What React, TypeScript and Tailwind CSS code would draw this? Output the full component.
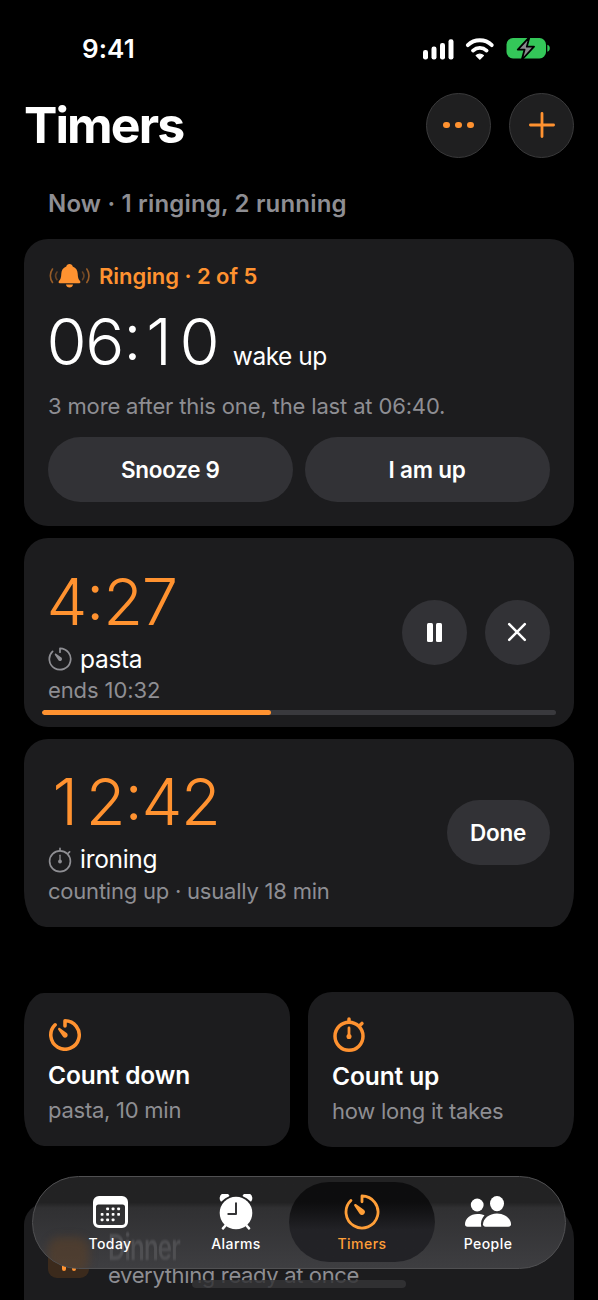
import React from 'react';

interface IconProps {
  className?: string;
  strokeWidth?: number;
}

interface StartCardProps {
  icon: React.ReactNode;
  title: string;
  hint: string;
  className?: string;
}

interface Tab {
  id: string;
  label: string;
  icon: React.ReactNode;
}

// Icons
const TimerIcon: React.FC<IconProps> = ({ className = '', strokeWidth = 2.8 }) => (
  <svg viewBox="0 0 36 36" className={className} fill="none" stroke="currentColor" strokeWidth={strokeWidth} strokeLinecap="round" strokeLinejoin="round">
    <path d="M18 7.800V2A16 16 0 1 1 6.900 6.500" />
    <path d="M10.500 10.300c.5-.5 1.100-.5 1.700-.1l7.300 5.200a3 3 0 1 1-4.100 4.100l-5-7.400c-.4-.6-.4-1.300.1-1.800z" fill="currentColor" stroke="none" />
  </svg>
);

const StopwatchIcon: React.FC<IconProps> = ({ className = '', strokeWidth = 2.8 }) => (
  <svg viewBox="0 0 36 40" className={className} fill="none" stroke="currentColor" strokeWidth={strokeWidth} strokeLinecap="round">
    <circle cx="18" cy="22" r="16" />
    <path d="M18 5.500V2.200M30.600 9.400L32.800 7.400" />
    <path d="M18 22V12.500" strokeWidth={strokeWidth * 0.8} />
    <circle cx="18" cy="22.300" r="2.900" fill="currentColor" stroke="none" />
  </svg>
);

const BellIcon = () => (
  <svg viewBox="0 0 42 24" className="h-6 w-[42px]" fill="none">
    <path d="M21.500 0c1.800 0 3 1.100 3.200 2.500 3.300 1.100 4.900 3.900 5 7.300.1 3.800.8 5.600 2.300 7.200.7.700.7 2.200-.8 2.200H11.800c-1.500 0-1.500-1.500-.8-2.200 1.500-1.600 2.200-3.400 2.300-7.200.1-3.400 1.700-6.200 5-7.300C18.500 1.100 19.700 0 21.500 0z" fill="#ff9230" />
    <path d="M18 20.600h7c-.2 1.800-1.600 3-3.500 3s-3.300-1.200-3.500-3z" fill="#ff9230" />
    <g stroke="#ff9230" strokeWidth="1.600" strokeLinecap="round">
      <path d="M4.500 5C1.600 9 1.600 14.500 4.500 18.500M38.800 5c2.900 4 2.900 9.500 0 13.500" opacity=".55" />
      <path d="M9 8c-1.800 2.400-1.800 5.300 0 7.700M34.500 8c1.800 2.400 1.800 5.300 0 7.700" opacity=".35" />
    </g>
  </svg>
);

const CalendarIcon = () => (
  <svg viewBox="0 0 35 32" className="h-8 w-[35px]">
    <path fillRule="evenodd" fill="#fff" d="M6 0h23a6 6 0 0 1 6 6v20a6 6 0 0 1-6 6H6a6 6 0 0 1-6-6V6a6 6 0 0 1 6-6zM5.500 8.500a2.500 2.500 0 0 0-2.500 2.500v15a3 3 0 0 0 3 3h23a3 3 0 0 0 3-3V11a2.500 2.500 0 0 0-2.500-2.500z" />
    <g fill="#fff">
      <rect x="13.200" y="11.500" width="2.800" height="2.800" rx=".8" />
      <rect x="18.700" y="11.500" width="2.800" height="2.800" rx=".8" />
      <rect x="24.200" y="11.500" width="2.800" height="2.800" rx=".8" />
      <rect x="7.700" y="17" width="2.800" height="2.800" rx=".8" />
      <rect x="13.200" y="17" width="2.800" height="2.800" rx=".8" />
      <rect x="18.700" y="17" width="2.800" height="2.800" rx=".8" />
      <rect x="24.200" y="17" width="2.800" height="2.800" rx=".8" />
      <rect x="7.700" y="22.500" width="2.800" height="2.800" rx=".8" />
      <rect x="13.200" y="22.500" width="2.800" height="2.800" rx=".8" />
      <rect x="18.700" y="22.500" width="2.800" height="2.800" rx=".8" />
    </g>
  </svg>
);

const AlarmIcon = () => (
  <svg viewBox="0 0 34 36" className="h-9 w-[34px]" fill="none">
    <circle cx="17" cy="19" r="16.300" fill="#fff" />
    <path d="M2.200 6.600A4.300 4.300 0 0 1 9.500 1.800C6.500 2.900 4.200 4.500 2.200 6.600zM31.800 6.600A4.300 4.300 0 0 0 24.500 1.800C27.500 2.900 29.800 4.500 31.800 6.600z" fill="#fff" stroke="#fff" strokeWidth="1.600" strokeLinejoin="round" />
    <path d="M6.500 31.500L4 34.300M27.500 31.500L30 34.300" stroke="#fff" strokeWidth="2.600" strokeLinecap="round" />
    <path d="M17 9.200V20H9.300" stroke="#343436" strokeWidth="2" strokeLinecap="round" strokeLinejoin="round" />
  </svg>
);

const PeopleIcon = () => (
  <svg viewBox="0 0 46 32" className="h-8 w-[46px]" fill="#fff">
    <circle cx="12.200" cy="9" r="6.400" />
    <ellipse cx="32" cy="7.600" rx="7" ry="7.600" />
    <path d="M19.500 19.200C17.600 18.300 15 17.900 12.300 17.900 5.500 17.900 0 22.600 0 28.300 0 29.700.8 30.700 2.500 30.700H16.300C15.300 26.800 16.500 22.500 19.500 19.200z" />
    <path d="M32 17.500c7.800 0 14 5.300 14 10.700 0 1.600-.9 2.500-2.700 2.500H20.700c-1.800 0-2.700-.9-2.700-2.500 0-5.400 6.200-10.700 14-10.700z" />
  </svg>
);

const StatusIcons = () => (
  <svg viewBox="0 0 128 24" className="h-6 w-32" fill="none">
    <g fill="#fff">
      <rect x="0" y="12" width="5" height="9.500" rx="2.200" />
      <rect x="8.500" y="8.500" width="5" height="13" rx="2.200" />
      <rect x="17" y="5" width="5" height="16.500" rx="2.200" />
      <rect x="25.500" y="1.200" width="5" height="20.300" rx="2.200" />
    </g>
    <g stroke="#fff" strokeWidth="3.800" strokeLinecap="round">
      <path d="M44.800 7.200C51.500.6 62.100.6 68.800 7.200" />
      <path d="M50 12.600c4-3.600 9.600-3.600 13.600 0" />
    </g>
    <path d="M53.300 17.500c2-1.800 5-1.800 7 0L56.800 21z" fill="#fff" stroke="#fff" strokeWidth="1.400" strokeLinejoin="round" />
    <rect x="83.500" y="0" width="39.500" height="20.500" rx="6.500" fill="#34c759" />
    <path d="M124.300 6.800c3.300.6 3.300 6.300 0 7z" fill="#34c759" />
    <path d="M106.500-1L94.800 11.600h6.800L98.700 22 111 8.700h-7.200z" fill="#8a8a8e" stroke="#000" strokeWidth="1.800" strokeLinejoin="round" />
  </svg>
);

// Large clock digits, every "1" is padded to the width of the others and the colon is raised
const BigTime: React.FC<{ value: string; className?: string }> = ({ value, className = '' }) => (
  <span className={`-ml-[1.500px] text-[65px] leading-[78px] font-light tracking-[-1.300px] ${className}`}>
    {value.split(/([1:])/).map((part, i) => {
      if (part === '1') return <span key={i} className="mr-[9px] ml-[6px]">1</span>;
      if (part === ':') return <span key={i} className="relative -top-[5px]">:</span>;
      return part;
    })}
  </span>
);

const StartCard: React.FC<StartCardProps> = ({ icon, title, hint, className = '' }) => (
  <button type="button" className={`flex flex-col items-start bg-[#1c1c1e] px-6 text-left ${className}`}>
    <span className="text-[#ff9230]">{icon}</span>
    <span className="mt-2 text-[24.500px] leading-8 font-semibold tracking-[-0.1px]">{title}</span>
    <span className="mt-[3px] text-[22px] leading-8 tracking-[-0.25px] text-[#8e8e93]">{hint}</span>
  </button>
);

const tabs: Tab[] = [
  { id: 'today', label: 'Today', icon: <CalendarIcon /> },
  { id: 'alarms', label: 'Alarms', icon: <AlarmIcon /> },
  { id: 'timers', label: 'Timers', icon: <TimerIcon className="h-9 w-9" strokeWidth={2.8} /> },
  { id: 'people', label: 'People', icon: <PeopleIcon /> },
];

const TabBar: React.FC<{ active: string }> = ({ active }) => (
  <nav className="absolute top-[1176px] left-8 flex h-[93px] w-[534px] justify-center overflow-hidden rounded-full border border-[#505052] bg-linear-to-b from-[#222223] from-28% via-[#303032] via-34% to-[#3e3e41]">
    {/* Content refracted through the glass */}
    <div className="absolute top-[60px] left-[15px] h-9 w-[41px] rounded-xl bg-[#5b4028] opacity-60 blur-[4px]" />
    <div className="absolute top-[51px] left-[75px] origin-top scale-y-[1.500] text-[24px] leading-[26px] font-semibold tracking-[-0.8px] text-[#4f4f52] blur-[0.6px]">Dinner</div>
    <div className="absolute top-[5px] left-[256px] h-20 w-[146px] rounded-full bg-linear-to-b from-[#0d0d0e] from-25% to-[#222226] to-60%" />
    {tabs.map((tab) => (
      <a
        key={tab.id}
        className={`relative flex w-[126px] flex-col items-center ${tab.id === active ? 'text-[#ff9f38]' : 'text-white'}`}
      >
        <span className="mt-[15px] flex h-10 items-center justify-center">{tab.icon}</span>
        <span className="mt-[3px] text-[14px] leading-[18px] font-medium tracking-[0.45px]">{tab.label}</span>
      </a>
    ))}
  </nav>
);

const App: React.FC = () => {
  const progress = 44.5;

  return (
    <div className="relative flex h-[1300px] w-[598px] flex-col overflow-hidden bg-black font-['Inter','Liberation_Sans',sans-serif] text-white">
      {/* Status bar */}
      <div className="flex h-[92px] shrink-0 items-start justify-between pt-[32px] pr-[47px] pl-[82px]">
        <span className="pt-px text-[26px] leading-8 font-semibold tracking-[0.1px]">9:41</span>
        <span className="pt-[6px]"><StatusIcons /></span>
      </div>

      {/* Title */}
      <header className="flex h-[66px] shrink-0 items-center pr-6 pl-6">
        <h1 className="flex-1 text-[50px] leading-none font-bold tracking-[-1.900px]">Timers</h1>
        <div className="flex gap-[18px]">
          <button type="button" aria-label="More" className="flex h-[65px] w-[65px] items-center justify-center gap-[5.500px] rounded-full border border-[#3a3a3b] bg-[#1f1f20]">
            <i className="h-[6.500px] w-[6.500px] rounded-full bg-[#ff9230]" />
            <i className="h-[6.500px] w-[6.500px] rounded-full bg-[#ff9230]" />
            <i className="h-[6.500px] w-[6.500px] rounded-full bg-[#ff9230]" />
          </button>
          <button type="button" aria-label="Add" className="flex h-[65px] w-[65px] items-center justify-center rounded-full border border-[#3a3a3b] bg-[#1f1f20]">
            <svg viewBox="0 0 26 26" className="h-[26px] w-[26px]" stroke="#ff9230" strokeWidth="2.800" strokeLinecap="round">
              <path d="M13 1.400v23.200M1.400 13h23.200" />
            </svg>
          </button>
        </div>
      </header>

      <h2 className="mt-[30px] shrink-0 pl-12 text-[24px] leading-8 font-semibold tracking-[0.18px] text-[#8e8e93]">Now · 1 ringing, 2 running</h2>

      <main className="mt-[19px] flex shrink-0 flex-col gap-3 px-6">
        {/* Ringing alarm */}
        <section className="flex h-[287px] w-[549.500px] flex-col rounded-[24px] bg-[#1c1c1e] px-6 pt-[21px]">
          <div className="flex h-8 items-center text-[#ff9230]">
            <BellIcon />
            <span className="ml-[9px] text-[22px] font-semibold tracking-[-0.05px]">Ringing · 2 of 5</span>
          </div>
          <div className="mt-[11px] flex h-[78px] items-baseline">
            <BigTime value="06:10" />
            <span className="ml-[14.500px] text-[24.500px] tracking-[-0.5px]">wake up</span>
          </div>
          <p className="mt-[9px] text-[22px] leading-8 tracking-[-0.15px] text-[#8e8e93]">3 more after this one, the last at 06:40.</p>
          <div className="mt-[15px] flex gap-3">
            <button type="button" className="h-[65px] flex-1 rounded-full bg-[#323236] text-[22.500px] font-semibold tracking-[-0.3px]">Snooze 9</button>
            <button type="button" className="h-[65px] flex-1 rounded-full bg-[#323236] text-[22.500px] font-semibold tracking-[-0.2px]">I am up</button>
          </div>
        </section>

        {/* Running countdown */}
        <section className="flex h-[188.500px] w-[549.500px] flex-col rounded-[24px] bg-[#1c1c1e] pt-6">
          <div className="flex items-center justify-between px-6">
            <div>
              <div className="flex pt-px"><BigTime value="4:27" className="text-[#ff9230]" /></div>
              <div className="mt-[2px] flex h-8 items-center text-[24.500px] tracking-[-0.3px]">
                <TimerIcon className="mr-2 h-6 w-6 text-[#8e8e93]" strokeWidth={2.6} />
                pasta
              </div>
              <div className="text-[22px] leading-[31px] tracking-[-0.1px] text-[#8e8e93]">ends 10:32</div>
            </div>
            <div className="mb-1 flex gap-[18px]">
              <button type="button" aria-label="Pause" className="flex h-[65px] w-[65px] items-center justify-center gap-[3px] rounded-full bg-[#323236]">
                <i className="h-[19px] w-[6px] rounded-[1.500px] bg-white" />
                <i className="h-[19px] w-[6px] rounded-[1.500px] bg-white" />
              </button>
              <button type="button" aria-label="Cancel" className="flex h-[65px] w-[65px] items-center justify-center rounded-full bg-[#323236]">
                <svg viewBox="0 0 20 20" className="h-5 w-5" stroke="#fff" strokeWidth="2.500" strokeLinecap="round">
                  <path d="M2.200 2.200l15.600 15.600M17.800 2.200L2.200 17.800" />
                </svg>
              </button>
            </div>
          </div>
          <div className="mx-[18px] mt-[3.500px] h-[5px] overflow-hidden rounded-full bg-[#39393d]">
            <div className="h-full rounded-full bg-[#ff9230]" style={{ width: `${progress}%` }} />
          </div>
        </section>

        {/* Running stopwatch */}
        <section className="flex h-[188.500px] w-[549.500px] items-center justify-between rounded-t-[24px] rounded-b-[22px_36px] bg-[#1c1c1e] px-6">
          <div className="pt-[4px]">
            <div className="flex"><BigTime value="12:42" className="text-[#ff9230]" /></div>
            <div className="mt-[3px] flex h-8 items-center text-[24.500px] tracking-[-0.3px]">
              <StopwatchIcon className="mr-2 h-[26px] w-6 text-[#8e8e93]" strokeWidth={2.6} />
              ironing
            </div>
            <div className="text-[22px] leading-[31px] tracking-[-0.22px] text-[#8e8e93]">counting up · usually 18 min</div>
          </div>
          <button type="button" className="h-[65px] w-[103px] rounded-full bg-[#323236] text-[22.500px] font-semibold tracking-[-0.3px]">Done</button>
        </section>
      </main>

      <div className="mt-[65px] flex w-full shrink-0 items-center justify-between pr-[24.500px] pl-6">
        <StartCard
          icon={<TimerIcon className="h-8 w-[34px]" strokeWidth={4} />}
          title="Count down"
          hint="pasta, 10 min"
          className="h-[153px] w-[266px] rounded-l-[20px_32px] rounded-r-[24px] pt-[26px]"
        />
        <StartCard
          icon={<StopwatchIcon className="h-[35px] w-[34px]" strokeWidth={4} />}
          title="Count up"
          hint="how long it takes"
          className="h-[155px] w-[265.500px] rounded-l-[24px] rounded-r-[20px_32px] pt-[25px]"
        />
      </div>

      {/* Next suggestion, half hidden by the tab bar */}
      <section className="mx-6 mt-[56px] flex h-[140px] w-[549.500px] shrink-0 rounded-[22px_36px] bg-[#1c1c1e] pt-[34px] pl-6">
        <div className="flex h-[41px] w-[41px] shrink-0 items-end justify-center gap-[6px] rounded-[9px] bg-[#3b2a1c] pb-[7px]">
          <i className="h-5 w-1 rounded-full bg-[#ff9230]" />
          <i className="h-5 w-1 rounded-full bg-[#ff9230]" />
        </div>
        <div className="ml-[19px] pt-[22px]">
          <div className="text-[22px] leading-8 tracking-[-0.35px] text-[#8e8e93]">everything ready at once</div>
        </div>
      </section>

      <TabBar active="timers" />

      {/* Home indicator */}
      <div className="absolute top-[1280px] left-48 h-[7.500px] w-[214px] rounded-full bg-[#343436]/85" />
    </div>
  );
};

export default App;
